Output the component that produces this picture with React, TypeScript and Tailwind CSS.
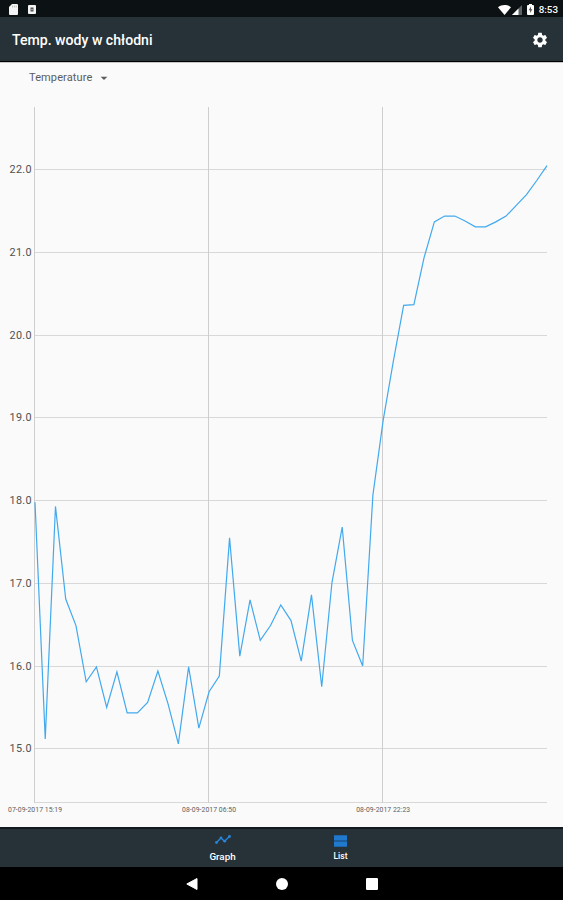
import { MdSettings, MdArrowDropDown } from 'react-icons/md'

const readings = [
  17.98, 15.12, 17.93, 16.81, 16.49, 15.81, 15.99, 15.5, 15.93, 15.435, 15.435, 15.56, 15.94,
  15.54, 15.06, 15.99, 15.25, 15.69, 15.88, 17.55, 16.12, 16.8, 16.31, 16.49, 16.74, 16.55,
  16.06, 16.86, 15.75, 17.01, 17.68, 16.31, 16.0, 18.07, 18.97, 19.69, 20.36, 20.37, 20.94,
  21.37, 21.44, 21.44, 21.38, 21.31, 21.31, 21.37, 21.44, 21.57, 21.7, 21.87, 22.05,
]

const ticks = [22, 21, 20, 19, 18, 17, 16, 15]

const dates = [
  { index: 0, label: '07-09-2017 15:19' },
  { index: 17, label: '08-09-2017 06:50' },
  { index: 34, label: '08-09-2017 22:23' },
]

const LEFT = 35
const RIGHT = 547
const TOP = 15
const BOTTOM = 711

const xAt = (index: number) => LEFT + (index * (RIGHT - LEFT)) / (readings.length - 1)
const yAt = (value: number) => 656.8 - (value - 15) * 82.72

function StatusBar() {
  return (
    <div className="flex h-[17px] shrink-0 items-center justify-between bg-[#0c1114] pl-[9px] pr-[5px] text-white">
      <div className="flex items-center gap-[10px] pt-px">
        <svg width="9" height="11" viewBox="0 0 9 11">
          <path d="M3 0h5a1 1 0 0 1 1 1v9a1 1 0 0 1-1 1H1a1 1 0 0 1-1-1V3z" fill="#f4f4f4" />
          <path d="M3.5 1.5v2M5.4 1.5v2M7.2 1.5v2" stroke="#aaa" strokeWidth=".7" />
        </svg>
        <svg width="8" height="9" viewBox="0 0 8 9">
          <rect width="8" height="9" rx="1" fill="#f4f4f4" />
          <path d="M2.5 2.5h3v4h-3z" fill="#555" />
          <path d="M3.5 4h1v1h-1z" fill="#eee" />
        </svg>
      </div>
      <div className="flex items-center pt-[2px]">
        <svg width="13" height="10" viewBox="0 0 13 10">
          <path d="M0 2.2C3.7-.7 9.3-.7 13 2.2L6.5 10z" fill="#fff" />
        </svg>
        <svg className="ml-px" width="10" height="10" viewBox="0 0 10 10">
          <path d="M0 10L10 0v10z" fill="#5d6265" />
          <path d="M0 10l6.5-6.5V10z" fill="#fff" />
        </svg>
        <svg className="ml-[5px]" width="7" height="11" viewBox="0 0 7 11">
          <path d="M2 0h3v1h1a1 1 0 0 1 1 1v8a1 1 0 0 1-1 1H1a1 1 0 0 1-1-1V2a1 1 0 0 1 1-1h1z" fill="#fff" />
          <path d="M4 2.5L1.6 6.3h1.5V9l2.3-3.8H4z" fill="#555" />
        </svg>
        <span className="ml-[5px] text-[9.8px] font-medium leading-[11px]">8:53</span>
      </div>
    </div>
  )
}

function Chart() {
  const points = readings.map((value, i) => `${xAt(i)},${yAt(value)}`).join(' ')

  return (
    <svg className="block shrink-0" width="563" height="735" viewBox="0 0 563 735">
      <g stroke="#d8d8d8" strokeWidth="1">
        {ticks.map((tick) => {
          const y = Math.floor(yAt(tick)) + 0.5
          return <line key={tick} x1={LEFT} x2={RIGHT} y1={y} y2={y} />
        })}
        <line x1={LEFT} x2={RIGHT} y1={BOTTOM - 0.5} y2={BOTTOM - 0.5} />
      </g>
      <g stroke="#cecece" strokeWidth="1">
        {dates.map(({ index }) => {
          const x = Math.floor(xAt(index)) - 0.5
          return <line key={index} x1={x} x2={x} y1={TOP} y2={BOTTOM} />
        })}
      </g>
      <polyline points={points} fill="none" stroke="#42a9ee" strokeWidth="1.2" />
      <g fill="#505050" fontSize="10.8" textAnchor="end">
        {ticks.map((tick) => (
          <text key={tick} x="31.5" y={yAt(tick) + 3.5} textLength="22">
            {tick.toFixed(1)}
          </text>
        ))}
      </g>
      <g fill="#606060" fontSize="6.8" textAnchor="middle">
        {dates.map(({ index, label }) => (
          <text key={index} x={xAt(index)} y="719.5" textLength="54">
            {label}
          </text>
        ))}
      </g>
    </svg>
  )
}

function BottomTabs() {
  return (
    <nav className="flex h-[40px] shrink-0 justify-center border-t-2 border-[#101a1f] bg-[#263238] font-medium text-white">
      <button className="flex w-[118px] flex-col items-center">
        <svg className="mt-[6px]" width="16" height="9" viewBox="0 0 16 9">
          <path d="M1.5 7.5L6 3l3.5 3.2 5-4.7" fill="none" stroke="#2685d8" strokeWidth="1.4" />
          <g fill="#2685d8">
            <circle cx="1.5" cy="7.5" r="1.4" />
            <circle cx="6" cy="2.8" r="1.4" />
            <circle cx="9.7" cy="6.2" r="1.4" />
            <circle cx="14.5" cy="1.5" r="1.4" />
          </g>
        </svg>
        <span className="mt-[7px] text-[9.8px] leading-[11px]">Graph</span>
      </button>
      <button className="flex w-[118px] flex-col items-center">
        <svg className="mt-[6px]" width="13" height="12" viewBox="0 0 13 12">
          <path d="M0 0h13v12H0z" fill="#1c66ae" />
          <path d="M0 1h13v4H0zM0 7h13v4H0z" fill="#2079cc" />
          <path d="M0 6h13" stroke="#1d5080" strokeWidth=".8" />
        </svg>
        <span className="mt-[4px] text-[8.5px] leading-[11px]">List</span>
      </button>
    </nav>
  )
}

function SystemNav() {
  return (
    <div className="flex h-[33px] shrink-0 items-center justify-center gap-[78px] bg-black">
      <svg width="12" height="12" viewBox="0 0 12 12">
        <path d="M11 .5v11L.8 6z" fill="#fff" stroke="#fff" strokeLinejoin="round" />
      </svg>
      <div className="size-[12px] rounded-full bg-white" />
      <div className="size-[12px] rounded-[1px] bg-white" />
    </div>
  )
}

export default function App() {
  return (
    <div className="flex h-[900px] w-[563px] flex-col overflow-hidden bg-[#fafafa] font-['Roboto',sans-serif]">
      <StatusBar />
      <header className="flex h-[45px] shrink-0 items-center justify-between border-b border-black bg-[#263238] pl-[12px] pr-[14px] pt-[2px] text-white">
        <h1 className="pt-[2px] text-[14.1px] font-medium">Temp. wody w chłodni</h1>
        <MdSettings size={18} />
      </header>
      <div className="flex h-[30px] shrink-0 items-center border-t border-[#c8c8c8] pl-[29px] text-[11px] text-[#5c5c5c]">
        <span className="w-[64px] pt-px tracking-[0.12px]">Temperature</span>
        <MdArrowDropDown className="ml-[3px]" size={16} />
      </div>
      <Chart />
      <BottomTabs />
      <SystemNav />
    </div>
  )
}
